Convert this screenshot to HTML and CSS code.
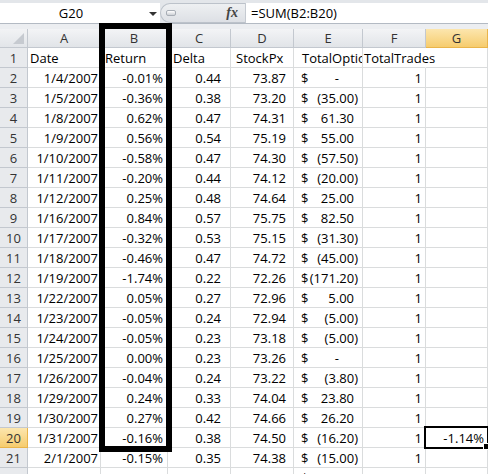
FILE: index.html
```html
<!DOCTYPE html>
<html lang="en">
<head>
    <meta charset="UTF-8">
    <title>Returns</title>
    <link rel="stylesheet" href="styles.css">
</head>
<body>
    <div class="window">
        <div class="formula-bar">
            <div class="name-box"><span class="name">G20</span><span class="drop"></span></div>
            <div class="fx-zone"><span class="grip"></span><span class="fx">fx</span></div>
            <div class="formula">=SUM(B2:B20)</div>
        </div>
        <div class="bar-gap"></div>

        <div class="sheet">
            <div class="corner"><span class="tri"></span></div>
            <div class="ch">A</div><div class="ch">B</div><div class="ch">C</div><div class="ch">D</div><div class="ch">E</div><div class="ch">F</div><div class="ch on">G</div>

            <div class="rh">1</div><div class="cell a t">Date</div><div class="cell b t">Return</div><div class="cell c t">Delta</div><div class="cell d t">StockPx</div><div class="cell e t">TotalOptions</div><div class="cell f t spill">TotalTrades</div><div class="cell g"></div>

            <div class="rh">2</div><div class="cell a">1/4/2007</div><div class="cell b">-0.01%</div><div class="cell c">0.44</div><div class="cell d">73.87</div><div class="cell e acct"><span>$</span><span class="z">-</span></div><div class="cell f">1</div><div class="cell g"></div>
            <div class="rh">3</div><div class="cell a">1/5/2007</div><div class="cell b">-0.36%</div><div class="cell c">0.38</div><div class="cell d">73.20</div><div class="cell e acct"><span>$</span><span>(35.00)</span></div><div class="cell f">1</div><div class="cell g"></div>
            <div class="rh">4</div><div class="cell a">1/8/2007</div><div class="cell b">0.62%</div><div class="cell c">0.47</div><div class="cell d">74.31</div><div class="cell e acct"><span>$</span><span class="p">61.30</span></div><div class="cell f">1</div><div class="cell g"></div>
            <div class="rh">5</div><div class="cell a">1/9/2007</div><div class="cell b">0.56%</div><div class="cell c">0.54</div><div class="cell d">75.19</div><div class="cell e acct"><span>$</span><span class="p">55.00</span></div><div class="cell f">1</div><div class="cell g"></div>
            <div class="rh">6</div><div class="cell a">1/10/2007</div><div class="cell b">-0.58%</div><div class="cell c">0.47</div><div class="cell d">74.30</div><div class="cell e acct"><span>$</span><span>(57.50)</span></div><div class="cell f">1</div><div class="cell g"></div>
            <div class="rh">7</div><div class="cell a">1/11/2007</div><div class="cell b">-0.20%</div><div class="cell c">0.44</div><div class="cell d">74.12</div><div class="cell e acct"><span>$</span><span>(20.00)</span></div><div class="cell f">1</div><div class="cell g"></div>
            <div class="rh">8</div><div class="cell a">1/12/2007</div><div class="cell b">0.25%</div><div class="cell c">0.48</div><div class="cell d">74.64</div><div class="cell e acct"><span>$</span><span class="p">25.00</span></div><div class="cell f">1</div><div class="cell g"></div>
            <div class="rh">9</div><div class="cell a">1/16/2007</div><div class="cell b">0.84%</div><div class="cell c">0.57</div><div class="cell d">75.75</div><div class="cell e acct"><span>$</span><span class="p">82.50</span></div><div class="cell f">1</div><div class="cell g"></div>
            <div class="rh">10</div><div class="cell a">1/17/2007</div><div class="cell b">-0.32%</div><div class="cell c">0.53</div><div class="cell d">75.15</div><div class="cell e acct"><span>$</span><span>(31.30)</span></div><div class="cell f">1</div><div class="cell g"></div>
            <div class="rh">11</div><div class="cell a">1/18/2007</div><div class="cell b">-0.46%</div><div class="cell c">0.47</div><div class="cell d">74.72</div><div class="cell e acct"><span>$</span><span>(45.00)</span></div><div class="cell f">1</div><div class="cell g"></div>
            <div class="rh">12</div><div class="cell a">1/19/2007</div><div class="cell b">-1.74%</div><div class="cell c">0.22</div><div class="cell d">72.26</div><div class="cell e acct"><span>$</span><span>(171.20)</span></div><div class="cell f">1</div><div class="cell g"></div>
            <div class="rh">13</div><div class="cell a">1/22/2007</div><div class="cell b">0.05%</div><div class="cell c">0.27</div><div class="cell d">72.96</div><div class="cell e acct"><span>$</span><span class="p">5.00</span></div><div class="cell f">1</div><div class="cell g"></div>
            <div class="rh">14</div><div class="cell a">1/23/2007</div><div class="cell b">-0.05%</div><div class="cell c">0.24</div><div class="cell d">72.94</div><div class="cell e acct"><span>$</span><span>(5.00)</span></div><div class="cell f">1</div><div class="cell g"></div>
            <div class="rh">15</div><div class="cell a">1/24/2007</div><div class="cell b">-0.05%</div><div class="cell c">0.23</div><div class="cell d">73.18</div><div class="cell e acct"><span>$</span><span>(5.00)</span></div><div class="cell f">1</div><div class="cell g"></div>
            <div class="rh">16</div><div class="cell a">1/25/2007</div><div class="cell b">0.00%</div><div class="cell c">0.23</div><div class="cell d">73.26</div><div class="cell e acct"><span>$</span><span class="z">-</span></div><div class="cell f">1</div><div class="cell g"></div>
            <div class="rh">17</div><div class="cell a">1/26/2007</div><div class="cell b">-0.04%</div><div class="cell c">0.24</div><div class="cell d">73.22</div><div class="cell e acct"><span>$</span><span>(3.80)</span></div><div class="cell f">1</div><div class="cell g"></div>
            <div class="rh">18</div><div class="cell a">1/29/2007</div><div class="cell b">0.24%</div><div class="cell c">0.33</div><div class="cell d">74.04</div><div class="cell e acct"><span>$</span><span class="p">23.80</span></div><div class="cell f">1</div><div class="cell g"></div>
            <div class="rh">19</div><div class="cell a">1/30/2007</div><div class="cell b">0.27%</div><div class="cell c">0.42</div><div class="cell d">74.66</div><div class="cell e acct"><span>$</span><span class="p">26.20</span></div><div class="cell f">1</div><div class="cell g"></div>
            <div class="rh on">20</div><div class="cell a">1/31/2007</div><div class="cell b">-0.16%</div><div class="cell c">0.38</div><div class="cell d">74.50</div><div class="cell e acct"><span>$</span><span>(16.20)</span></div><div class="cell f">1</div><div class="cell g">-1.14%</div>
            <div class="rh">21</div><div class="cell a">2/1/2007</div><div class="cell b">-0.15%</div><div class="cell c">0.35</div><div class="cell d">74.38</div><div class="cell e acct"><span>$</span><span>(15.00)</span></div><div class="cell f">1</div><div class="cell g"></div>
            <div class="rh"></div><div class="cell a"></div><div class="cell b"></div><div class="cell c"></div><div class="cell d"></div><div class="cell e acct"><span>$</span></div><div class="cell f"></div><div class="cell g"></div>
        </div>

        <!-- hand-drawn box around the Return column -->
        <div class="mark"></div>
        <!-- active cell G20 -->
        <div class="select"><span class="handle"></span></div>
    </div>
</body>
</html>
```

FILE: styles.css
```css
:root {
    --grid: #dadcdd;
    --head-line: #c3c8cf;
    --head-bg: #e8eaed;
    --txt: #000;
}

body {
    margin: 0;
    padding: 0;
    background: #fff;
    font-family: "Open Sans", "Liberation Sans", sans-serif;
    font-size: 13px;
    color: var(--txt);
}

.window {
    position: relative;
    width: 488px;
    height: 474px;
    overflow: hidden;
}

/* formula bar */
.formula-bar {
    display: flex;
    height: 24px;
    padding-top: 3px;
    box-sizing: border-box;
    background: #e3e6ea;
    border-bottom: 1px solid #b3bac3;
}

.name-box {
    position: relative;
    width: 160px;
    background: #fff;
    line-height: 20px;
}

.name-box .name {
    display: block;
    width: 142px;
    text-align: center;
}

.name-box .drop {
    position: absolute;
    top: 9px;
    left: 149px;
    border-top: 4px solid #333;
    border-left: 4px solid transparent;
    border-right: 4px solid transparent;
}

.fx-zone {
    display: flex;
    align-items: center;
    justify-content: space-between;
    width: 85px;
    padding: 0 7px 0 5px;
    box-sizing: border-box;
    background: linear-gradient(#eef0f2, #dde0e5);
    border: 1px solid #bcc2ca;
    border-right: none;
    border-radius: 10px 0 0 10px;
}

.fx-zone .grip {
    width: 8px;
    height: 4px;
    border: 1px solid #a7adb5;
    border-radius: 2px;
    background: linear-gradient(#ffffff, #cdd1d6);
}

.fx-zone .fx {
    font-family: "Liberation Serif", serif;
    font-style: italic;
    font-weight: bold;
    font-size: 14px;
    color: #444;
}

.formula {
    flex: 1;
    padding-left: 5px;
    background: #fff;
    border-left: 1px solid #c5cad1;
    line-height: 20px;
}

.bar-gap {
    height: 5px;
    background: #eceef1;
}

/* sheet */
.sheet {
    display: grid;
    grid-template-columns: 28px 73px 67px 63px 63px 69px 63px 62px;
    grid-template-rows: 19px repeat(22, 20px);
}

.sheet > div {
    box-sizing: border-box;
    white-space: nowrap;
    overflow: hidden;
}

.corner,
.ch,
.rh {
    background: var(--head-bg);
    border-right: 1px solid var(--head-line);
    border-bottom: 1px solid var(--head-line);
    color: #333;
    text-align: center;
}

.corner {
    display: flex;
    align-items: flex-end;
    justify-content: flex-end;
    padding: 0 3px 3px 0;
    background: linear-gradient(#f2f3f5, #e2e5e9);
}

.corner .tri {
    border-left: 11px solid transparent;
    border-bottom: 11px solid #c6cad0;
}

.ch {
    line-height: 18px;
    background: linear-gradient(#f3f4f6, #e1e4e8);
}

.rh {
    line-height: 20px;
}

.ch.on,
.rh.on {
    background: linear-gradient(#fce6ae, #f6cc6e);
    border-color: #e9b44a;
}

.cell {
    border-right: 1px solid var(--grid);
    border-bottom: 1px solid var(--grid);
    line-height: 20px;
    text-align: right;
}

.cell.t {
    text-align: left;
}

.cell.spill {
    overflow: visible;
    border-right-color: transparent;
}

.a { padding: 0 2px; }
.b { padding: 0 4px; }
.c { padding: 0 9px 0 5px; }
.d { padding: 0 7px 0 5px; }
.e { padding: 0 4px 0 8px; }
.f { padding: 0 3px 0 1px; }
.g { padding: 0 3px; }

.acct {
    display: flex;
    justify-content: space-between;
    padding-left: 7px;
}

.acct .p {
    padding-right: 4px;
}

.acct .z {
    padding-right: 19px;
}

/* overlays */
.mark {
    position: absolute;
    left: 99px;
    top: 23px;
    width: 73px;
    height: 429px;
    border: 6px solid #000;
    box-sizing: border-box;
}

.select {
    position: absolute;
    left: 424px;
    top: 426px;
    width: 65px;
    height: 23px;
    border: 2px solid #000;
    box-sizing: border-box;
}

.select .handle {
    position: absolute;
    right: -3px;
    bottom: -3px;
    width: 5px;
    height: 5px;
    background: #000;
    border: 1px solid #fff;
}
```
